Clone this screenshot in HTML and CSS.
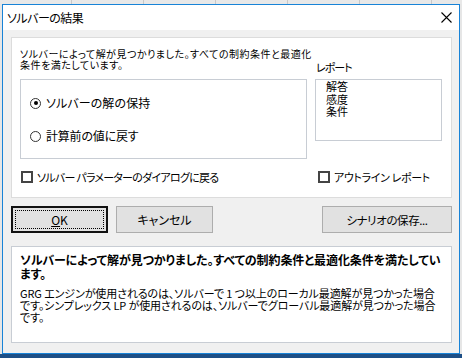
FILE: index.html
```html
<html lang="ja">
<head>
<meta charset="utf-8">
<title>ソルバーの結果</title>
<link rel="stylesheet" href="styles.css">
</head>
<body>
    <div class="sheet-strip"></div>
    <div class="window">
        <div class="titlebar">
            <span class="title">ソルバーの結果</span>
            <svg class="close" width="11" height="11" viewBox="0 0 11 11">
                <path d="M0.5 0.5 L10.5 10.5 M10.5 0.5 L0.5 10.5" stroke="#000" stroke-width="1.1" fill="none"/>
            </svg>
        </div>
        <div class="content">
            <div class="panel">
                <div class="msg">
                    <div>ソルバーによって解が見つかりました。すべての制約条件と最適化</div>
                    <div>条件を満たしています。</div>
                </div>
                <div class="middle">
                    <div class="options">
                        <div class="opt"><span class="radio on"></span><span class="opt-a">ソルバーの解の保持</span></div>
                        <div class="opt"><span class="radio"></span><span class="opt-b">計算前の値に戻す</span></div>
                    </div>
                    <div class="report">
                        <div class="report-label">レポート</div>
                        <div class="listbox">
                            <div>解答</div>
                            <div>感度</div>
                            <div>条件</div>
                        </div>
                    </div>
                </div>
                <div class="checks">
                    <div class="chk"><span class="box"></span><span class="chk-a">ソルバー パラメーターのダイアログに戻る</span></div>
                    <div class="chk"><span class="box"></span><span class="chk-b">アウトライン レポート</span></div>
                </div>
            </div>
            <div class="buttons">
                <div class="btn default"><span class="focus"><u>O</u>K</span></div>
                <div class="btn">キャンセル</div>
                <div class="spacer"></div>
                <div class="btn wide">シナリオの保存...</div>
            </div>
            <div class="desc">
                <div class="desc-head">
                    <div>ソルバーによって解が見つかりました。すべての制約条件と最適化条件を満たしてい</div>
                    <div>ます。</div>
                </div>
                <div class="desc-body">
                    <div>GRG エンジンが使用されるのは、ソルバーで 1 つ以上のローカル最適解が見つかった場合</div>
                    <div>です。シンプレックス LP が使用されるのは、ソルバーでグローバル最適解が見つかった場合</div>
                    <div>です。</div>
                </div>
            </div>
        </div>
    </div>
    <div class="taskbar"></div>
</body>
</html>
```

FILE: styles.css
```css
    body{
        margin: 0;
        width: 462px;
        height: 358px;
        overflow: hidden;
        background: #e6e6e6;
        font-family: "Noto Sans CJK JP", "Noto Sans", sans-serif;
        font-feature-settings: "palt";
        font-size: 12px;
        color: #000;
    }
    /* excel grid peeking out above the dialog */
    .sheet-strip{
        height: 4px;
        background: repeating-linear-gradient(90deg, #e8e8e8 0, #e8e8e8 71px, #c8c8c8 71px, #c8c8c8 72px);
    }
    .taskbar{
        height: 6px;
        background: #1d4f86;
    }
    .window{
        margin-left: 2px;
        width: 456px;
        height: 348px;
        border: 1px solid #1883d7;
        background: #f0f0f0;
        display: flex;
        flex-direction: column;
    }
    .titlebar{
        height: 25px;
        background: #fff;
        display: flex;
        align-items: center;
        padding: 0 6px 0 4px;
    }
    .title{
        flex: 1;
        letter-spacing: -0.5px;
    }
    .close{
        margin-right: 1px;
    }
    .content{
        flex: 1;
        padding: 7px 7px 0 8px;
    }
    .panel{
        height: 159px;
        background: #fff;
        border: 1px solid #dcdcdc;
        padding: 0 8px;
    }
    .msg{
        margin-top: 10px;
        font-size: 10px;
        line-height: 11px;
        letter-spacing: 0.5px;
        white-space: nowrap;
    }
    .msg div{
        height: 11px;
    }
    .middle{
        display: flex;
        margin-top: -1px;
    }
    .options{
        margin-top: 10px;
        width: 287px;
        height: 80px;
        border: 1px solid #c8cdd4;
        display: flex;
        flex-direction: column;
        gap: 19px;
        padding: 16px 0 0 9px;
        box-sizing: border-box;
    }
    .opt{
        display: flex;
        align-items: center;
        line-height: 14px;
    }
    .opt-a{
        letter-spacing: 0.1px;
    }
    .opt-b{
        letter-spacing: -0.2px;
    }
    .radio{
        width: 11px;
        height: 11px;
        border: 1px solid #333;
        border-radius: 50%;
        box-sizing: border-box;
        margin-right: 5px;
        position: relative;
    }
    .radio.on::after{
        content: "";
        position: absolute;
        left: 2.5px;
        top: 2.5px;
        width: 4px;
        height: 4px;
        border-radius: 50%;
        background: #000;
    }
    .report{
        margin-left: 8px;
        margin-top: -7px;
    }
    .report-label{
        font-size: 11px;
        line-height: 11px;
        letter-spacing: -1px;
        padding-left: 1px;
    }
    .listbox{
        margin-top: 6px;
        width: 127px;
        height: 62px;
        box-sizing: border-box;
        border: 1px solid #c8cdd4;
        padding: 0 0 0 10px;
        font-size: 11px;
        line-height: 12.5px;
    }
    .checks{
        display: grid;
        grid-template-columns: 297px auto;
        margin-top: 11px;
        padding-left: 1px;
    }
    .chk{
        display: flex;
        align-items: center;
        line-height: 14px;
        font-size: 11px;
    }
    .chk-a{
        letter-spacing: -0.75px;
    }
    .chk-b{
        letter-spacing: -0.35px;
    }
    .box{
        width: 12px;
        height: 12px;
        border: 2px solid #444;
        box-sizing: border-box;
        margin-right: 4px;
        background: #fff;
    }
    .buttons{
        display: flex;
        margin-top: 8px;
        gap: 8px;
    }
    .spacer{
        flex: 1;
    }
    .btn{
        height: 27px;
        width: 97px;
        box-sizing: border-box;
        border: 1px solid #adadad;
        background: #e1e1e1;
        display: flex;
        align-items: center;
        justify-content: center;
    }
    .btn.default{
        border: 2px solid #111;
        padding: 2px;
    }
    .focus{
        flex: 1;
        align-self: stretch;
        border: 1px dotted #000;
        display: flex;
        align-items: center;
        justify-content: center;
    }
    .btn.wide{
        width: 130px;
        font-size: 11.5px;
        letter-spacing: -0.4px;
    }
    .desc{
        margin-top: 13px;
        height: 97px;
        box-sizing: border-box;
        background: #fff;
        border: 1px solid #c8cdd4;
        padding: 6px 8px 0 8px;
        white-space: nowrap;
    }
    .desc-head{
        font-weight: bold;
        line-height: 14px;
        letter-spacing: -0.1px;
    }
    .desc-body{
        margin-top: 6px;
        font-size: 11px;
        line-height: 12px;
        letter-spacing: -0.1px;
    }
    .desc-body div{
        height: 12px;
    }
```
